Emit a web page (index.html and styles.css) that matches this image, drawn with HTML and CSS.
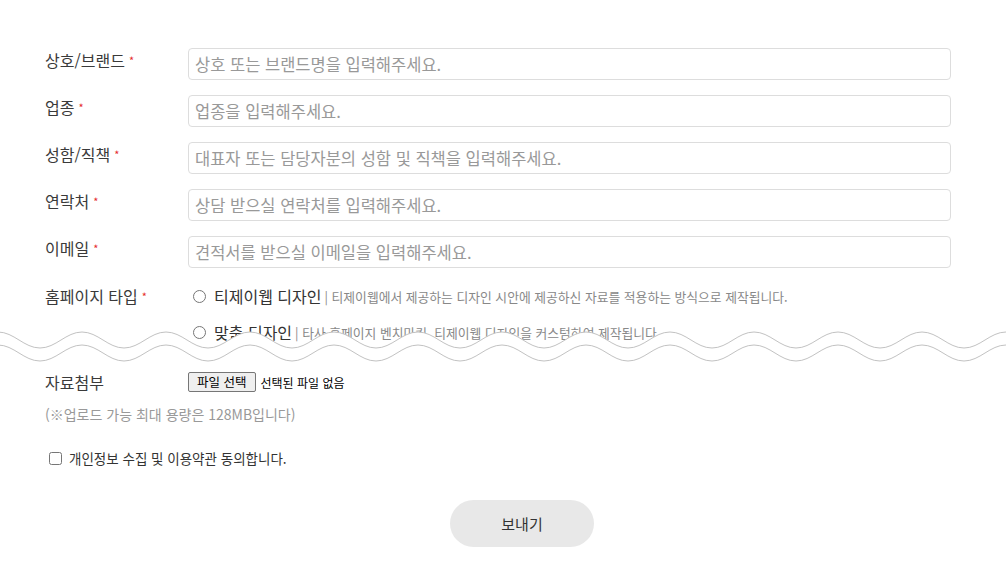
FILE: index.html
```html
<!DOCTYPE html>
<html lang="ko">
<head>
    <meta charset="UTF-8">
    <meta name="viewport" content="width=device-width, initial-scale=1.0">
    <title>견적 문의</title>
    <link rel="stylesheet" href="styles.css">
</head>
<body>
    <div class="page">
        <form class="quote-form" onsubmit="return false;">
            <div class="form-row">
                <label class="form-label" for="brand">상호/브랜드<span class="req">*</span></label>
                <input class="form-input" id="brand" type="text" placeholder="상호 또는 브랜드명을 입력해주세요.">
            </div>
            <div class="form-row">
                <label class="form-label" for="biz">업종<span class="req">*</span></label>
                <input class="form-input" id="biz" type="text" placeholder="업종을 입력해주세요.">
            </div>
            <div class="form-row">
                <label class="form-label" for="name">성함/직책<span class="req">*</span></label>
                <input class="form-input" id="name" type="text" placeholder="대표자 또는 담당자분의 성함 및 직책을 입력해주세요.">
            </div>
            <div class="form-row">
                <label class="form-label" for="tel">연락처<span class="req">*</span></label>
                <input class="form-input" id="tel" type="text" placeholder="상담 받으실 연락처를 입력해주세요.">
            </div>
            <div class="form-row">
                <label class="form-label" for="mail">이메일<span class="req">*</span></label>
                <input class="form-input" id="mail" type="text" placeholder="견적서를 받으실 이메일을 입력해주세요.">
            </div>
            <div class="form-row type-row">
                <span class="form-label tall">홈페이지 타입<span class="req">*</span></span>
                <div class="options">
                    <label class="option">
                        <input type="radio" name="type">
                        <span class="option-title">티제이웹 디자인</span>
                        <span class="option-desc">| 티제이웹에서 제공하는 디자인 시안에 제공하신 자료를 적용하는 방식으로 제작됩니다.</span>
                    </label>
                    <label class="option">
                        <input type="radio" name="type">
                        <span class="option-title">맞춤 디자인</span>
                        <span class="option-desc">| 타사 홈페이지 벤치마킹, 티제이웹 디자인을 커스텀하여 제작됩니다.</span>
                    </label>
                </div>
            </div>
            <div class="form-row file-row">
                <span class="form-label short">자료첨부</span>
                <div class="file-box">
                    <button type="button" class="file-btn">파일 선택</button>
                    <span class="file-name">선택된 파일 없음</span>
                </div>
            </div>
            <p class="notice">(※업로드 가능 최대 용량은 128MB입니다)</p>
            <label class="agree">
                <input type="checkbox">
                <span>개인정보 수집 및 이용약관 동의합니다.</span>
            </label>
            <div class="actions">
                <button type="submit" class="send-btn">보내기</button>
            </div>
        </form>

        <!-- cut mark over the omitted part of the form -->
        <svg class="cut" width="1006" height="48" viewBox="0 0 1006 48" aria-hidden="true">
            <defs>
                <path id="wave" d="M -2 10 C 14 10 24 26 40 26 S 66 10 82 10 S 108 26 124 26 S 150 10 166 10 S 192 26 208 26 S 234 10 250 10 S 276 26 292 26 S 318 10 334 10 S 360 26 376 26 S 402 10 418 10 S 444 26 460 26 S 486 10 502 10 S 528 26 544 26 S 570 10 586 10 S 612 26 628 26 S 654 10 670 10 S 696 26 712 26 S 738 10 754 10 S 780 26 796 26 S 822 10 838 10 S 864 26 880 26 S 906 10 922 10 S 948 26 964 26 S 990 10 1006 10 S 1032 26 1048 26"/>
            </defs>
            <path d="M -2 10 C 14 10 24 26 40 26 S 66 10 82 10 S 108 26 124 26 S 150 10 166 10 S 192 26 208 26 S 234 10 250 10 S 276 26 292 26 S 318 10 334 10 S 360 26 376 26 S 402 10 418 10 S 444 26 460 26 S 486 10 502 10 S 528 26 544 26 S 570 10 586 10 S 612 26 628 26 S 654 10 670 10 S 696 26 712 26 S 738 10 754 10 S 780 26 796 26 S 822 10 838 10 S 864 26 880 26 S 906 10 922 10 S 948 26 964 26 S 990 10 1006 10 S 1032 26 1048 26 L 1048 48 L -2 48 Z" fill="#fff"/>
            <use href="#wave" fill="none" stroke="#c2c2c2" stroke-width="1"/>
            <use href="#wave" fill="none" stroke="#c2c2c2" stroke-width="1" transform="translate(0 13)"/>
        </svg>
    </div>
</body>
</html>
```

FILE: styles.css
```css
body {
    margin: 0;
    background: #fff;
    color: #333;
    font-family: "Noto Sans CJK KR", "Noto Sans", sans-serif;
}

.page {
    position: relative;
    padding: 48px 7px 40px 45px;
}

.form-row {
    display: flex;
    align-items: flex-start;
    padding-right: 48px;
    margin-bottom: 15px;
}

.form-label {
    width: 143px;
    flex-shrink: 0;
    font-size: 16px;
    line-height: 24px;
    color: #3a3a3a;
}

.form-label.tall {
    line-height: 26px;
}

.form-label.short {
    line-height: 20px;
}

.req {
    color: #e52b2b;
    font-size: 11px;
    margin-left: 4px;
    vertical-align: 2px;
}

.form-input {
    flex: 1;
    height: 32px;
    box-sizing: border-box;
    margin: 0;
    padding: 0 6px;
    border: 1px solid #ddd;
    border-radius: 4px;
    font-family: inherit;
    font-size: 16.5px;
    color: #333;
    outline: none;
}

.form-input::placeholder {
    color: #999;
}

.options {
    display: flex;
    flex-direction: column;
    gap: 10px;
}

.option {
    display: flex;
    align-items: center;
    height: 26px;
    white-space: nowrap;
}

.option input {
    width: 13px;
    height: 13px;
    margin: 0 8px 0 5px;
}

.option-title {
    font-size: 16px;
    color: #333;
}

.option-desc {
    margin-left: 3px;
    font-size: 12.8px;
    color: #888;
}

.type-row {
    margin-bottom: 27px;
}

.file-row {
    margin-bottom: 12px;
}

.file-box {
    display: flex;
    align-items: center;
    height: 20px;
}

.file-btn {
    height: 20px;
    box-sizing: border-box;
    padding: 0 8px;
    border: 1px solid #767676;
    border-radius: 2px;
    background: #efefef;
    font-family: inherit;
    font-size: 12.5px;
    line-height: 18px;
    color: #000;
}

.file-name {
    margin-left: 5px;
    font-size: 12px;
    color: #000;
}

.notice {
    margin: 0;
    font-size: 14px;
    line-height: 20px;
    color: #999;
}

.agree {
    display: flex;
    align-items: center;
    height: 20px;
    margin-top: 24px;
    font-size: 13.5px;
    color: #333;
}

.agree input {
    width: 13px;
    height: 13px;
    margin: 0 7px 0 4px;
}

.actions {
    display: flex;
    justify-content: center;
    margin-top: 32px;
}

.send-btn {
    width: 144px;
    height: 47px;
    border: none;
    border-radius: 24px;
    background: #e8e8e8;
    font-family: inherit;
    font-size: 15px;
    color: #333;
    cursor: pointer;
}

.cut {
    position: absolute;
    left: 0;
    top: 322px;
    display: block;
}
```
